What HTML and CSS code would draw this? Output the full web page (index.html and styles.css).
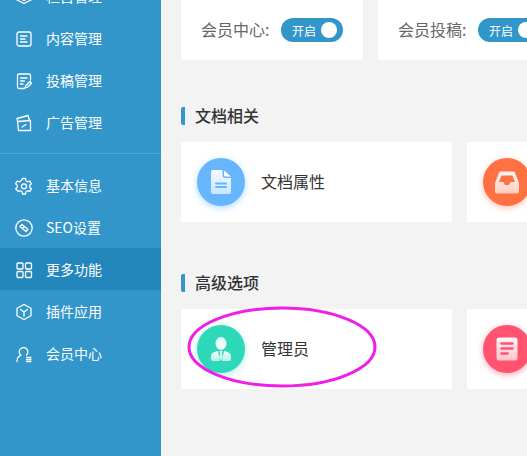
FILE: index.html
```html
<!DOCTYPE html>
<html lang="zh">
<head>
    <meta charset="UTF-8">
    <meta name="viewport" content="width=device-width, initial-scale=1.0">
    <title>更多功能</title>
    <link rel="stylesheet" href="styles.css">
</head>
<body>
    <svg class="defs" width="0" height="0">
        <defs>
            <linearGradient id="fade" x1="0" y1="0" x2="0" y2="1">
                <stop offset="0" stop-color="#fff" stop-opacity="0.95"/>
                <stop offset="1" stop-color="#fff" stop-opacity="0.65"/>
            </linearGradient>
        </defs>
    </svg>

    <div class="sidebar">
        <ul class="menu menu-top">
            <li>
                <svg viewBox="0 0 18 18"><path d="M9 2 16 5.500 9 9 2 5.500ZM2 9 9 12.500 16 9M2 12 9 15.500 16 12"/></svg>
                栏目管理
            </li>
            <li>
                <svg viewBox="0 0 18 18"><rect x="2" y="2" width="14" height="14" rx="2"/><path d="M5.500 6H12M5.500 9H10M5.500 12H12"/></svg>
                内容管理
            </li>
            <li>
                <svg viewBox="0 0 18 18"><path d="M9 16.500H4a1.500 1.500 0 0 1-1.500-1.500V3.500A1.500 1.500 0 0 1 4 2h10a1.500 1.500 0 0 1 1.500 1.500V8M5.500 6H12M5.500 9H9.500M5.500 12H8M10 16 10.800 13.500 14.800 9.500 16.500 11.200 12.500 15.200Z"/></svg>
                投稿管理
            </li>
            <li>
                <svg viewBox="0 0 18 18"><path d="M2.500 7.500 15.500 6.500V16.500H3.500ZM2.500 7.500 2 4.500 13 1.500 14.500 6.500M7 13 11 10.500"/></svg>
                广告管理
            </li>
        </ul>
        <ul class="menu">
            <li>
                <svg viewBox="0 0 18 18"><path d="M7.500 1.500h3l.5 2.300 1.700 1 2.200-.7 1.500 2.600-1.700 1.600v2l1.700 1.500-1.500 2.600-2.200-.7-1.700 1-.5 2.300h-3l-.5-2.300-1.700-1-2.200.7L.6 11.800l1.700-1.500v-2L.6 6.700l1.500-2.600 2.200.7 1.700-1z"/><circle cx="9" cy="9.300" r="2.500"/></svg>
                基本信息
            </li>
            <li>
                <svg viewBox="0 0 18 18"><circle cx="9" cy="9" r="8.200"/><path d="M5 7.500 7 5.500 13 10.500 11 12.500ZM7.500 9.500 9.500 7.500"/></svg>
                SEO设置
            </li>
            <li class="active">
                <svg viewBox="0 0 18 18"><rect x="2" y="2" width="6" height="6" rx="1"/><rect x="10.500" y="2" width="6" height="6" rx="1"/><rect x="2" y="10.500" width="6" height="6" rx="1"/><rect x="10.500" y="10.500" width="6" height="6" rx="1"/></svg>
                更多功能
            </li>
            <li>
                <svg viewBox="0 0 18 18"><path d="M9 1.500 16 5.300V12.700L9 16.500 2 12.700V5.300ZM5.500 6.500 9 9 12.500 6.500M9 9V13"/></svg>
                插件应用
            </li>
            <li>
                <svg viewBox="0 0 18 18"><path d="M2 16.500C2 13 3.500 11 6 10.300A4.300 4.300 0 1 1 11.500 10M11.500 12.500H16M11.500 14.500H16M11.500 16.500H16"/></svg>
                会员中心
            </li>
        </ul>
    </div>

    <div class="main">
        <div class="row">
            <div class="card switch-card">
                <span class="label">会员中心:</span>
                <span class="switch">开启<i></i></span>
            </div>
            <div class="card switch-card">
                <span class="label">会员投稿:</span>
                <span class="switch">开启<i></i></span>
            </div>
        </div>

        <h3 class="title">文档相关</h3>
        <div class="row">
            <div class="card link-card">
                <div class="circle blue">
                    <svg viewBox="0 0 24 24"><path fill="url(#fade)" d="M2 2a2 2 0 0 1 2-2h9.500v5.500a2.500 2.500 0 0 0 2.500 2.500h6v14a2 2 0 0 1-2 2H4a2 2 0 0 1-2-2Z"/><path fill="#fff" d="M15 .5 22 6.500H16.500a1.500 1.500 0 0 1-1.500-1.500Z"/><path class="cut-blue" d="M7 13.500H17M7 17H17"/></svg>
                </div>
                <span>文档属性</span>
            </div>
            <div class="card link-card">
                <div class="circle orange">
                    <svg viewBox="0 0 24 24"><path fill="url(#fade)" fill-rule="evenodd" d="M5.500 1.500h13a1.500 1.500 0 0 1 1.400 1L24 13v8.500a2 2 0 0 1-2 2H2a2 2 0 0 1-2-2V13L4.100 2.500a1.500 1.500 0 0 1 1.400-1ZM6.500 5.500 4 12H8c.5 0 .8.300 1 .8l.5 1.400c.2.500.5.800 1 .8h3c.5 0 .8-.3 1-.8l.5-1.400c.2-.5.500-.8 1-.8h4l-2.500-6.500Z"/></svg>
                </div>
            </div>
        </div>

        <h3 class="title">高级选项</h3>
        <div class="row">
            <div class="card link-card">
                <div class="circle green">
                    <svg viewBox="0 0 24 24"><ellipse cx="12" cy="6.500" rx="5.500" ry="6.500" fill="#fff" fill-opacity="0.9"/><path fill="url(#fade)" d="M9 14 11 24H4a2 2 0 0 1-2-2V19C2 16.500 5 14.700 9 14ZM15 14C19 14.700 22 16.500 22 19V22a2 2 0 0 1-2 2H13Z"/><path fill="url(#fade)" d="M10.500 14h3L13 16.500l.8 4.500L12 23.500 10.200 21l.8-4.500Z"/></svg>
                </div>
                <span>管理员</span>
            </div>
            <div class="card link-card">
                <div class="circle red">
                    <svg viewBox="0 0 24 24"><rect width="21" height="23" x="1.500" y=".5" rx="2.500" fill="url(#fade)"/><path class="cut-red" d="M6.500 6.500H17.500M6.500 11.500H17.500M6.500 16.500H12.500"/></svg>
                </div>
            </div>
        </div>

        <!-- 红圈标注 -->
        <svg class="mark" viewBox="0 0 190 82"><ellipse cx="95" cy="41" rx="93" ry="39"/></svg>
    </div>
</body>
</html>
```

FILE: styles.css
```css
body {
    font-family: "Noto Sans CJK SC", "Liberation Sans", sans-serif;
    margin: 0;
    padding: 0;
    height: 456px;
    overflow: hidden;
    display: flex;
    background-color: #f3f3f3;
}

.defs {
    position: absolute;
}

.sidebar {
    width: 161px;
    flex-shrink: 0;
    background-color: #3296cb;
    color: #ffffff;
    font-size: 14px;
}

.menu {
    list-style: none;
    margin: 0;
    padding: 10px 0 0;
}

.menu-top {
    margin-top: -25px;
    padding: 0 0 10px;
    border-bottom: 1px solid #4ba5d4;
}

.menu li {
    height: 42px;
    display: flex;
    align-items: center;
    padding-left: 15px;
    gap: 13px;
    line-height: 20px;
    box-sizing: border-box;
}

.menu li.active {
    background-color: #2386bc;
}

.menu svg {
    width: 18px;
    height: 18px;
    margin-top: 2px;
    fill: none;
    stroke: #ffffff;
    stroke-width: 1.300;
    stroke-linejoin: round;
    stroke-linecap: round;
}

.main {
    position: relative;
    flex: 1;
    min-width: 0;
    padding-left: 20px;
}

.row {
    display: flex;
    gap: 15px;
}

.card {
    height: 80px;
    flex-shrink: 0;
    display: flex;
    align-items: center;
    background-color: #ffffff;
    box-sizing: border-box;
}

.switch-card {
    width: 182px;
    height: 60px;
    padding-left: 20px;
    font-size: 16px;
    color: #666666;
}

.label {
    width: 80px;
    line-height: 20px;
    padding-bottom: 2px;
}

.switch {
    width: 62px;
    height: 24px;
    box-sizing: border-box;
    padding-left: 11px;
    border-radius: 12px;
    display: flex;
    align-items: center;
    background-color: #3296cb;
    color: #ffffff;
    font-size: 12px;
}

.switch i {
    width: 16px;
    height: 16px;
    margin-left: 5px;
    border-radius: 50%;
    background-color: #ffffff;
}

.title {
    margin: 47px 0 17px;
    height: 18px;
    line-height: 16px;
    padding-left: 10px;
    border-left: 4px solid #3296cb;
    border-radius: 2px;
    font-size: 16px;
    font-weight: 500;
    color: #333333;
}

.title:nth-of-type(2) {
    margin-top: 52px;
}

.link-card {
    width: 271px;
    padding-left: 16px;
    font-size: 16px;
    color: #333333;
}

.link-card span {
    line-height: 20px;
    padding-bottom: 2px;
}

.circle {
    width: 48px;
    height: 48px;
    flex-shrink: 0;
    margin-right: 16px;
    border-radius: 50%;
    display: flex;
    align-items: center;
    justify-content: center;
}

.circle svg {
    width: 24px;
    height: 24px;
}

.blue {
    background-color: #66b5ff;
    box-shadow: 0 2px 6px rgba(102,181,255,0.5);
}

.orange {
    background-color: #ff7043;
    box-shadow: 0 2px 6px rgba(255,112,67,0.4);
}

.green {
    background-color: #2ed9b9;
    box-shadow: 0 2px 6px rgba(46,217,185,0.4);
}

.red {
    background-color: #ff5370;
    box-shadow: 0 2px 6px rgba(255,83,112,0.5);
}

.cut-blue,
.cut-red {
    fill: none;
    stroke-width: 2;
    stroke-linecap: round;
}

.cut-blue {
    stroke: #66b5ff;
}

.cut-red {
    stroke: #ff5370;
    stroke-width: 2.600;
}

.mark {
    position: absolute;
    left: 26px;
    top: 306px;
    width: 190px;
    height: 82px;
    fill: none;
    stroke: #f01fe8;
    stroke-width: 3;
}
```
